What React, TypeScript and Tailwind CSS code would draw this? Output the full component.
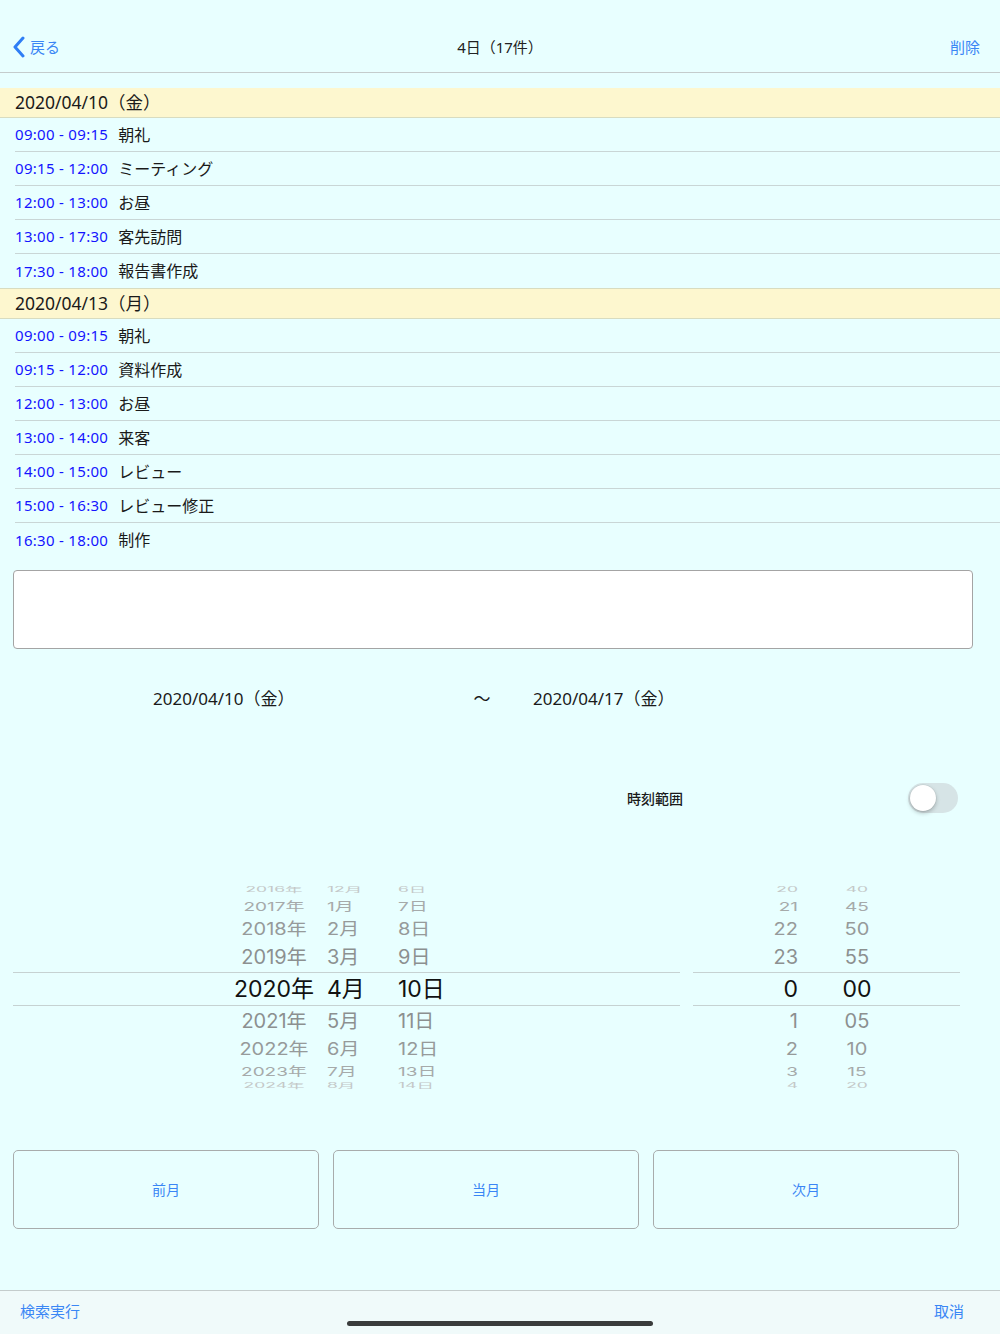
import React from "react";

const JP = { fontFamily: '"Noto Sans", "Noto Sans CJK JP", sans-serif' };
const NUM = { fontFamily: 'Inter, "Noto Sans CJK JP", sans-serif' };

type Ev = [string, string];
const day1: Ev[] = [
  ["09:00 - 09:15", "朝礼"],
  ["09:15 - 12:00", "ミーティング"],
  ["12:00 - 13:00", "お昼"],
  ["13:00 - 17:30", "客先訪問"],
  ["17:30 - 18:00", "報告書作成"],
];
const day2: Ev[] = [
  ["09:00 - 09:15", "朝礼"],
  ["09:15 - 12:00", "資料作成"],
  ["12:00 - 13:00", "お昼"],
  ["13:00 - 14:00", "来客"],
  ["14:00 - 15:00", "レビュー"],
  ["15:00 - 16:30", "レビュー修正"],
  ["16:30 - 18:00", "制作"],
];

function Header({ text }: { text: string }) {
  return (
    <div
      className="h-[30px] bg-[#fdf7cf] border-b border-[#d8dcc0] flex items-center pl-[15px] text-[17.5px] text-[#1a1a1a]"
      style={JP}
    >
      {text}
    </div>
  );
}

function Row({ ev, last }: { ev: Ev; last?: boolean }) {
  return (
    <div className="h-[34px] pl-[15px] flex">
      <div className={`flex-1 flex items-center gap-[10px] ${last ? "" : "border-b border-[#c9d6d6]"}`}>
        <span className="text-[15px] text-[#1414ff] tracking-[0.3px]" style={JP}>
          {ev[0]}
        </span>
        <span className="text-[16px] text-[#1a1a1a]" style={JP}>
          {ev[1]}
        </span>
      </div>
    </div>
  );
}

const specs = [
  { h: 12, fs: 17.5, c: "text-[#c4c8c8]", s: 0.4 },
  { h: 20, fs: 19, c: "text-[#a6aaaa]", s: 0.65 },
  { h: 26, fs: 20, c: "text-[#969a9a]", s: 0.85 },
  { h: 30, fs: 20, c: "text-[#8c9090]", s: 0.97 },
  { h: 34, fs: 23, c: "text-[#111111]", s: 1 },
  { h: 30, fs: 20, c: "text-[#8c9090]", s: 0.97 },
  { h: 26, fs: 20, c: "text-[#969a9a]", s: 0.85 },
  { h: 18, fs: 19, c: "text-[#a6aaaa]", s: 0.65 },
  { h: 12, fs: 17.5, c: "text-[#c4c8c8]", s: 0.4 },
];

function Col({ items, w, align }: { items: string[]; w: string; align: string }) {
  return (
    <div className={`flex flex-col ${w}`}>
      {items.map((t, i) => (
        <div
          key={i}
          className={`flex items-center ${align} ${specs[i].c} whitespace-nowrap`}
          style={{ height: specs[i].h, fontSize: specs[i].fs, ...NUM }}
        >
          <span className="inline-block leading-none" style={{ transform: `scaleY(${specs[i].s})` }}>
            {t}
          </span>
        </div>
      ))}
    </div>
  );
}

export default function App() {
  const years = ["2016年", "2017年", "2018年", "2019年", "2020年", "2021年", "2022年", "2023年", "2024年"];
  const months = ["12月", "1月", "2月", "3月", "4月", "5月", "6月", "7月", "8月"];
  const days = ["6日", "7日", "8日", "9日", "10日", "11日", "12日", "13日", "14日"];
  const hours = ["20", "21", "22", "23", "0", "1", "2", "3", "4"];
  const mins = ["40", "45", "50", "55", "00", "05", "10", "15", "20"];

  return (
    <div className="w-[1000px] h-[1334px] bg-[#e8ffff] flex flex-col overflow-hidden" style={JP}>
      {/* nav bar */}
      <div className="h-[73px] border-b border-[#c4cccc] flex items-end pb-[14px] px-[12px]">
        <div className="flex items-center gap-[4px] text-[#3a86f5] text-[15px]">
          <svg width="14" height="22" viewBox="0 0 14 22">
            <path d="M11 2 L3 11 L11 20" fill="none" stroke="#2f7ef5" strokeWidth="3" strokeLinecap="round" strokeLinejoin="round" />
          </svg>
          <span>戻る</span>
        </div>
        <div className="flex-1 text-center text-[15px] text-[#222] pr-[10px]">4日（17件）</div>
        <div className="text-[15px] text-[#3a86f5] pr-[8px]">削除</div>
      </div>

      {/* list */}
      <div className="mt-[15px] flex flex-col">
        <Header text="2020/04/10（金）" />
        {day1.map((e, i) => (
          <Row key={i} ev={e} last={i === day1.length - 1} />
        ))}
        <div className="border-t border-[#d8dcc0]">
          <Header text="2020/04/13（月）" />
        </div>
        {day2.map((e, i) => (
          <Row key={i} ev={e} last={i === day2.length - 1} />
        ))}
      </div>

      {/* text box */}
      <div className="mx-[13px] mt-[13px] w-[960px] h-[79px] bg-white border-[1.5px] border-[#a4a4a4] rounded-[4px]" />

      {/* date range */}
      <div className="mt-[37px] h-[26px] flex items-center text-[17px] text-[#1a1a1a]">
        <span className="ml-[153px] w-[314px]">2020/04/10（金）</span>
        <span className="w-[30px] text-center">〜</span>
        <span className="ml-[36px]">2020/04/17（金）</span>
      </div>

      {/* time range toggle */}
      <div className="mt-[70px] h-[32px] flex items-center">
        <span className="ml-[627px] text-[14px] font-medium text-[#1a1a1a]">時刻範囲</span>
        <div className="ml-auto mr-[42px] w-[50px] h-[30px] rounded-full bg-[#d6e4e6] p-[2px] flex items-center">
          <div className="w-[26px] h-[26px] rounded-full bg-white shadow-[0_2px_4px_rgba(0,0,0,0.25),0_0_0_0.5px_rgba(0,0,0,0.08)]" />
        </div>
      </div>

      {/* pickers */}
      <div className="mt-[70px] flex">
        <div className="ml-[13px] w-[667px] relative flex">
          <div className="absolute left-0 right-0 top-[88px] h-[34px] border-y border-[#c6d2d2]" />
          <Col items={years} w="ml-[208px] w-[106px]" align="justify-center" />
          <Col items={months} w="w-[71px]" align="justify-start" />
          <Col items={days} w="w-[80px]" align="justify-start" />
        </div>
        <div className="ml-[13px] w-[267px] relative flex">
          <div className="absolute left-0 right-0 top-[88px] h-[34px] border-y border-[#c6d2d2]" />
          <Col items={hours} w="ml-[60px] w-[45px]" align="justify-end" />
          <Col items={mins} w="ml-[39px] w-[40px]" align="justify-center" />
        </div>
      </div>

      {/* month buttons */}
      <div className="mt-[58px] px-[13px] flex gap-[14px] w-[972px]">
        {["前月", "当月", "次月"].map((t) => (
          <div
            key={t}
            className="flex-1 h-[79px] border-[1.5px] border-[#a8acac] rounded-[5px] flex items-center justify-center text-[14px] text-[#3a86f5]"
          >
            {t}
          </div>
        ))}
      </div>

      {/* bottom toolbar */}
      <div className="mt-auto h-[44px] border-t border-[#c4cccc] bg-[#f0fafa] flex items-center justify-between px-[20px] pb-[2px] relative">
        <span className="text-[15px] text-[#3a86f5]">検索実行</span>
        <span className="text-[15px] text-[#3a86f5] mr-[16px]">取消</span>
        <div className="absolute left-[347px] bottom-[8px] w-[306px] h-[5px] rounded-full bg-[#3a3c3c]" />
      </div>
    </div>
  );
}
